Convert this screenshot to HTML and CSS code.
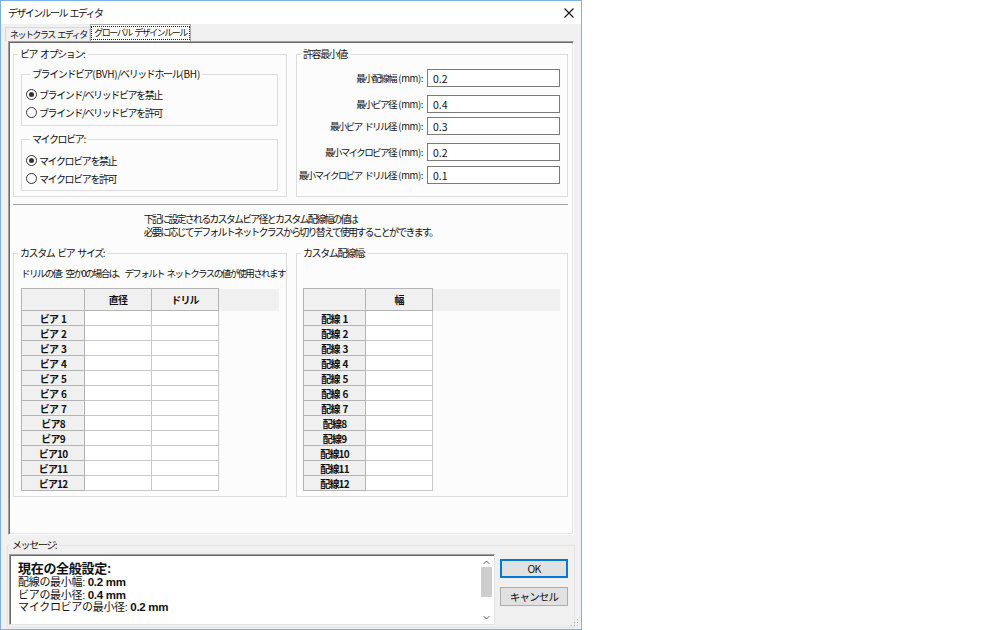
FILE: index.html
```html
<!DOCTYPE html>
<html lang="ja">
<head>
    <meta charset="UTF-8">
    <title>デザインルール エディタ</title>
    <link rel="stylesheet" href="styles.css">
</head>
<body>
    <div class="window">
        <div class="titlebar">
            <span class="title">デザインルール エディタ</span>
            <svg class="close" width="10" height="10" viewBox="0 0 10 10">
                <path d="M0.5 0.5 L9.5 9.5 M9.5 0.5 L0.5 9.5" stroke="#111" stroke-width="1.1" fill="none"/>
            </svg>
        </div>

        <div class="tabs">
            <div class="tab">ネットクラス エディタ</div>
            <div class="tab active"><span class="focus">グローバル デザインルール</span></div>
        </div>

        <div class="panel">
            <div class="row">
                <fieldset class="group top-group">
                    <legend>ビア オプション<span class="lat">:</span></legend>
                    <fieldset class="group inner first">
                        <legend>ブラインドビア<span class="lat">(BVH)</span>/ベリッドホール<span class="lat">(BH)</span></legend>
                        <label class="radio"><span class="dot checked"></span>ブラインド/ベリッドビアを禁止</label>
                        <label class="radio"><span class="dot"></span>ブラインド/ベリッドビアを許可</label>
                    </fieldset>
                    <fieldset class="group inner second">
                        <legend>マイクロビア<span class="lat">:</span></legend>
                        <label class="radio"><span class="dot checked"></span>マイクロビアを禁止</label>
                        <label class="radio"><span class="dot"></span>マイクロビアを許可</label>
                    </fieldset>
                </fieldset>

                <fieldset class="group top-group">
                    <legend>許容最小値<span class="lat">:</span></legend>
                    <div class="limit-row r1"><div class="lbl"><span>最小配線幅 <span class="lat">(mm):</span></span></div><input type="text" value="0.2"></div>
                    <div class="limit-row r2"><div class="lbl"><span>最小ビア径 <span class="lat">(mm):</span></span></div><input type="text" value="0.4"></div>
                    <div class="limit-row r3"><div class="lbl"><span>最小ビア ドリル径 <span class="lat">(mm):</span></span></div><input type="text" value="0.3"></div>
                    <div class="limit-row r2"><div class="lbl"><span>最小マイクロビア径 <span class="lat">(mm):</span></span></div><input type="text" value="0.2"></div>
                    <div class="limit-row r4"><div class="lbl"><span>最小マイクロビア ドリル径 <span class="lat">(mm):</span></span></div><input type="text" value="0.1"></div>
                </fieldset>
            </div>

            <div class="sep"></div>

            <div class="note">
                <p>下記に設定されるカスタムビア径とカスタム配線幅の値は<br>必要に応じてデフォルトネットクラスから切り替えて使用することができます。</p>
            </div>

            <div class="row">
                <fieldset class="group bottom-group">
                    <legend>カスタム ビア サイズ<span class="lat">:</span></legend>
                    <div class="hint">ドリルの値<span class="lat">:</span> 空か0の場合は、デフォルト ネットクラスの値が使用されます</div>
                    <table class="grid via-grid">
                        <colgroup><col class="c-head"><col class="c-val"><col class="c-val"><col></colgroup>
                        <tr class="head"><th></th><th>直径</th><th>ドリル</th><th class="fill"></th></tr>
                        <tr><th>ビア 1</th><td></td><td></td><td class="fill"></td></tr>
                        <tr><th>ビア 2</th><td></td><td></td><td class="fill"></td></tr>
                        <tr><th>ビア 3</th><td></td><td></td><td class="fill"></td></tr>
                        <tr><th>ビア 4</th><td></td><td></td><td class="fill"></td></tr>
                        <tr><th>ビア 5</th><td></td><td></td><td class="fill"></td></tr>
                        <tr><th>ビア 6</th><td></td><td></td><td class="fill"></td></tr>
                        <tr><th>ビア 7</th><td></td><td></td><td class="fill"></td></tr>
                        <tr><th>ビア8</th><td></td><td></td><td class="fill"></td></tr>
                        <tr><th>ビア9</th><td></td><td></td><td class="fill"></td></tr>
                        <tr><th>ビア10</th><td></td><td></td><td class="fill"></td></tr>
                        <tr><th>ビア11</th><td></td><td></td><td class="fill"></td></tr>
                        <tr><th>ビア12</th><td></td><td></td><td class="fill"></td></tr>
                    </table>
                </fieldset>

                <fieldset class="group bottom-group">
                    <legend>カスタム配線幅<span class="lat">:</span></legend>
                    <table class="grid track-grid">
                        <colgroup><col class="c-head2"><col class="c-val"><col></colgroup>
                        <tr class="head"><th></th><th>幅</th><th class="fill"></th></tr>
                        <tr><th>配線 1</th><td></td><td class="fill"></td></tr>
                        <tr><th>配線 2</th><td></td><td class="fill"></td></tr>
                        <tr><th>配線 3</th><td></td><td class="fill"></td></tr>
                        <tr><th>配線 4</th><td></td><td class="fill"></td></tr>
                        <tr><th>配線 5</th><td></td><td class="fill"></td></tr>
                        <tr><th>配線 6</th><td></td><td class="fill"></td></tr>
                        <tr><th>配線 7</th><td></td><td class="fill"></td></tr>
                        <tr><th>配線8</th><td></td><td class="fill"></td></tr>
                        <tr><th>配線9</th><td></td><td class="fill"></td></tr>
                        <tr><th>配線10</th><td></td><td class="fill"></td></tr>
                        <tr><th>配線11</th><td></td><td class="fill"></td></tr>
                        <tr><th>配線12</th><td></td><td class="fill"></td></tr>
                    </table>
                </fieldset>
            </div>
        </div>

        <fieldset class="group messages">
            <legend>メッセージ<span class="lat">:</span></legend>
            <div class="msg-row">
                <div class="msg-box">
                    <div class="msg-text">
                        <div class="msg-title">現在の全般設定:</div>
                        <div>配線の最小幅: <b>0.2 mm</b></div>
                        <div>ビアの最小径: <b>0.4 mm</b></div>
                        <div>マイクロビアの最小径: <b>0.2 mm</b></div>
                    </div>
                    <div class="scrollbar">
                        <svg width="7" height="5" viewBox="0 0 7 5"><path d="M0.5 4 L3.5 1 L6.5 4" stroke="#606060" fill="none"/></svg>
                        <div class="thumb"></div>
                        <div class="track"></div>
                        <svg width="7" height="5" viewBox="0 0 7 5"><path d="M0.5 1 L3.5 4 L6.5 1" stroke="#606060" fill="none"/></svg>
                    </div>
                </div>
                <div class="buttons">
                    <button class="btn default">OK</button>
                    <button class="btn">キャンセル</button>
                </div>
            </div>
        </fieldset>
        <svg class="grip" width="8" height="8" viewBox="0 0 8 8">
            <rect x="6" y="0" width="1" height="1" fill="#b0b0b0"/>
            <rect x="3" y="3" width="1" height="1" fill="#b0b0b0"/>
            <rect x="6" y="3" width="1" height="1" fill="#b0b0b0"/>
            <rect x="0" y="6" width="1" height="1" fill="#b0b0b0"/>
            <rect x="3" y="6" width="1" height="1" fill="#b0b0b0"/>
            <rect x="6" y="6" width="1" height="1" fill="#b0b0b0"/>
        </svg>
    </div>
</body>
</html>
```

FILE: styles.css
```css
body {
    margin: 0;
    background-color: #fff;
    font-family: "Noto Sans CJK JP", sans-serif;
    font-size: 10px;
    letter-spacing: -1.4px;
    word-spacing: 2px;
    color: #111;
}
.lat {
    letter-spacing: -0.2px;
}
.window {
    position: relative;
    width: 582px;
    height: 630px;
    box-sizing: border-box;
    border: 1px solid #7eb1e3;
    background-color: #f0f0f0;
}
.titlebar {
    display: flex;
    align-items: center;
    justify-content: space-between;
    height: 23px;
    padding: 0 7px 0 7px;
    background-color: #fff;
}
.title {
    letter-spacing: -1.6px;
}
.tabs {
    display: flex;
    align-items: flex-end;
    height: 17px;
    padding-left: 4px;
    font-size: 9px;
    letter-spacing: -1.5px;
}
.tab {
    height: 14px;
    line-height: 14px;
    width: 85px;
    box-sizing: border-box;
    padding-left: 4px;
    white-space: nowrap;
    border: 1px solid #d9d9d9;
    border-bottom: none;
    background-color: #f0f0f0;
}
.tab.active {
    width: 101px;
    height: 17px;
    padding: 0;
    border-color: #adadad;
    background-color: #fff;
    display: flex;
    align-items: center;
    justify-content: center;
}
.tab .focus {
    display: block;
    width: 97px;
    height: 12px;
    line-height: 12px;
    text-align: center;
    border: 1px dotted #222;
}
.panel {
    height: 494px;
    margin: 0 7px;
    box-sizing: border-box;
    padding: 6px 5px 0 4px;
    border: 1px solid;
    border-color: #a0a0a0 #fff #fff #a0a0a0;
    box-shadow: inset 1px 1px 0 #696969, inset -1px -1px 0 #e3e3e3;
    background-color: #fcfcfc;
}
.row {
    display: grid;
    grid-template-columns: 274px 272px;
    column-gap: 9px;
}
.group {
    margin: 0;
    padding: 0;
    min-width: 0;
    border: 1px solid #dcdcdc;
}
.group legend {
    padding: 0 2px;
    margin-left: 4px;
    line-height: 12px;
    height: 12px;
    white-space: nowrap;
}
.top-group {
    height: 149px;
    box-sizing: border-box;
}
.inner {
    margin: 8px 8px 0 7px;
    padding: 5px 0 4px 4px;
}
.inner.second {
    margin-top: 7px;
    padding: 6px 0 3px 4px;
}
.radio {
    display: flex;
    align-items: center;
    gap: 2px;
    height: 18px;
}
.dot {
    position: relative;
    width: 11px;
    height: 11px;
    box-sizing: border-box;
    border: 1px solid #333;
    border-radius: 50%;
    background-color: #fff;
}
.dot.checked::after {
    content: "";
    position: absolute;
    left: 2px;
    top: 2px;
    width: 5px;
    height: 5px;
    border-radius: 50%;
    background-color: #333;
}
.limit-row {
    display: grid;
    grid-template-columns: 126px 133px;
    column-gap: 4px;
    align-items: center;
    height: 18px;
}
.limit-row .lbl {
    display: flex;
    justify-content: flex-end;
    white-space: nowrap;
    font-size: 9.5px;
    letter-spacing: -1.6px;
}
.limit-row .lbl .lat {
    letter-spacing: -0.4px;
}
.limit-row input {
    box-sizing: border-box;
    width: 133px;
    height: 18px;
    margin: 0;
    padding: 0 0 0 5px;
    border: 1px solid #7a7a7a;
    font-family: "Noto Sans CJK JP", sans-serif;
    font-size: 10.5px;
    color: #111;
    background-color: #fff;
}
.limit-row.r1 { margin-top: 9px; }
.limit-row.r2 { margin-top: 8px; }
.limit-row.r3 { margin-top: 4px; }
.limit-row.r4 { margin-top: 5px; }
.sep {
    margin-top: 7px;
    height: 1px;
    background-color: #a0a0a0;
}
.note {
    margin-top: 7px;
    text-align: center;
}
.note p {
    display: inline-block;
    margin: 0;
    text-align: left;
    line-height: 13px;
    letter-spacing: -1.8px;
}
.note + .row {
    margin-top: 8px;
}
.bottom-group {
    height: 250px;
    box-sizing: border-box;
}
.hint {
    margin: 8px 0 0 7px;
    line-height: 13px;
    white-space: nowrap;
    font-size: 9.5px;
    letter-spacing: -1.6px;
}
.grid {
    table-layout: fixed;
    border-collapse: collapse;
    margin-top: 8px;
    letter-spacing: -0.8px;
    word-spacing: 1.5px;
}
.via-grid {
    width: 258px;
    margin-left: 7px;
}
.track-grid {
    width: 257px;
    margin-left: 6px;
    margin-top: 29px;
}
.c-head { width: 63px; }
.c-head2 { width: 62px; }
.c-val { width: 67px; }
.grid th,
.grid td {
    padding: 0;
    height: 14px;
    line-height: 13px;
    border: 1px solid #c8c8c8;
    background-color: #fff;
}
.grid th {
    background-color: #f0f0f0;
    border-color: #b4b4b4;
    font-weight: bold;
    text-align: center;
}
.grid tr.head th {
    height: 21px;
}
.grid .fill {
    border: none;
    background-color: transparent;
}
.grid tr.head .fill {
    background-color: #f0f0f0;
}
.messages {
    margin: 4px 6px 0 6px;
    height: 89px;
    box-sizing: border-box;
    border-color: #e3e3e3;
}
.messages legend {
    margin-left: 2px;
}
.msg-row {
    display: flex;
    gap: 5px;
    padding: 3px 0 0 1px;
}
.msg-box {
    display: flex;
    width: 486px;
    height: 71px;
    box-sizing: border-box;
    border: 1px solid;
    border-color: #a0a0a0 #e3e3e3 #e3e3e3 #a0a0a0;
    box-shadow: inset 1px 1px 0 #696969;
    background-color: #fff;
}
.msg-text {
    flex: 1;
    padding: 7px 0 0 8px;
    font-family: "Liberation Sans", "Noto Sans CJK JP", sans-serif;
    font-size: 11px;
    letter-spacing: -0.3px;
    word-spacing: 0;
    line-height: 12.5px;
}
.msg-text b {
    font-size: 11.5px;
}
.msg-title {
    font-size: 13px;
    font-weight: bold;
    line-height: 14px;
}
.scrollbar {
    display: flex;
    flex-direction: column;
    align-items: center;
    width: 15px;
    padding: 5px 0 4px;
}
.thumb {
    width: 11px;
    height: 30px;
    margin-top: 2px;
    background-color: #cdcdcd;
}
.track {
    flex: 1;
}
.buttons {
    display: flex;
    flex-direction: column;
    width: 68px;
}
.btn {
    height: 19px;
    margin-top: 9px;
    padding: 0;
    border: 1px solid #adadad;
    background-color: #e1e1e1;
    font-family: "Noto Sans CJK JP", sans-serif;
    font-size: 10.5px;
    letter-spacing: -0.8px;
    color: #111;
}
.btn.default {
    margin-top: 5px;
    border-color: #0078d7;
    box-shadow: inset 0 0 0 1px #0078d7;
}
.grip {
    position: absolute;
    right: 2px;
    bottom: 2px;
}
```
